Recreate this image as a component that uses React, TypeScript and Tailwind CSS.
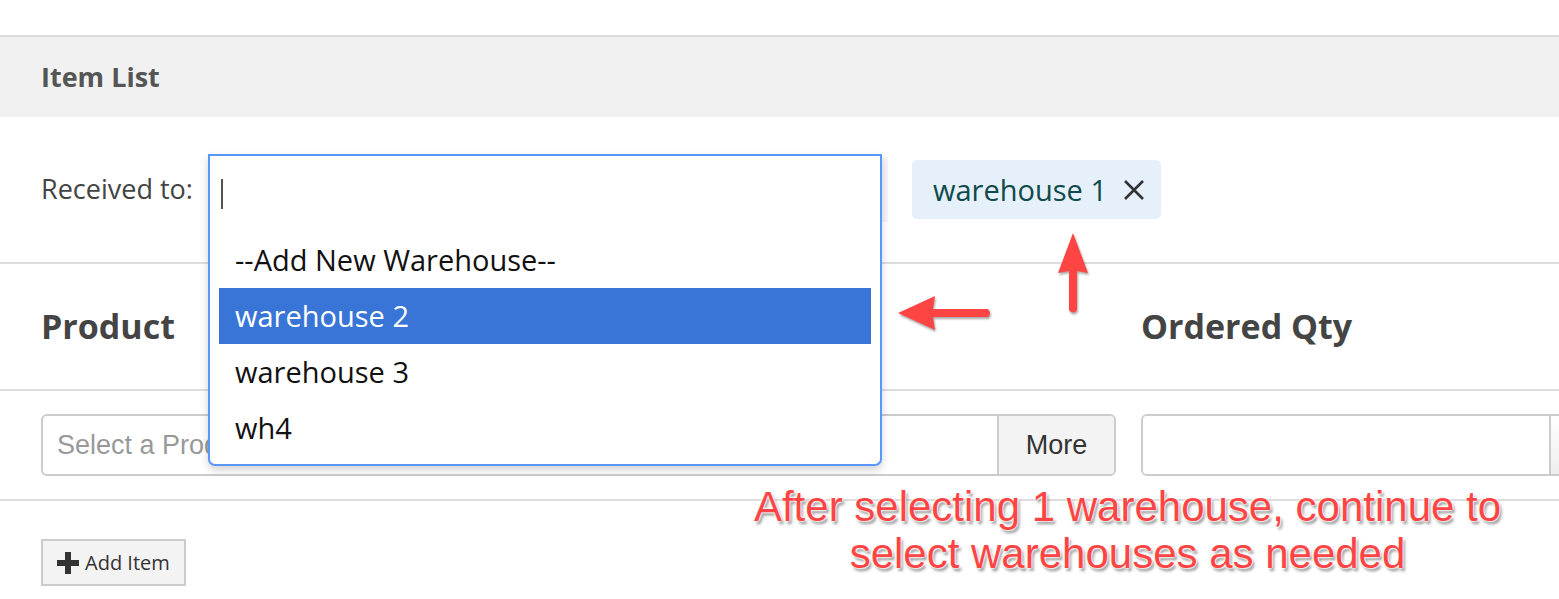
import React from "react";

const options = ["--Add New Warehouse--", "warehouse 2", "warehouse 3", "wh4"];

function PlusIcon() {
    return (
        <svg width="24" height="24" viewBox="0 0 24 24" className="shrink-0">
            <path d="M12 1v22M1 12h22" stroke="#333333" strokeWidth="6" />
        </svg>
    );
}

function LeftArrow() {
    return (
        <svg width="110" height="50" viewBox="0 0 110 50" className="absolute left-[893px] top-[290px] z-20 drop-shadow-[1px_2px_1px_rgba(0,0,0,0.35)]">
            <path d="M5 23 L42 6 L40 19 L95 19 Q99 23 95 27 L40 27 L42 40 Z" fill="#ff4444" />
        </svg>
    );
}

function UpArrow() {
    return (
        <svg width="40" height="90" viewBox="0 0 40 90" className="absolute left-[1054px] top-[230px] z-20 drop-shadow-[1px_2px_1px_rgba(0,0,0,0.35)]">
            <path d="M19 3 L34 43 L23 41 L23 80 Q19 85 15 80 L15 41 L4 43 Z" fill="#ff4444" />
        </svg>
    );
}

export default function App() {
    return (
        <div className="relative w-[1559px] h-[599px] overflow-hidden bg-white font-['Open_Sans',sans-serif]">
            {/* Top spacer */}
            <div className="h-[35px]"></div>

            {/* Header */}
            <div className="h-[82px] border-t-2 border-[#dddddd] bg-[#f1f1f1] flex items-center px-[41px]">
                <h2 className="text-[27px] font-bold text-[#555555]">Item List</h2>
            </div>

            {/* Received to row */}
            <div className="relative h-[145px] flex items-center px-[41px]">
                <span className="text-[27px] text-[#444444] w-[167px]">Received to:</span>
                <div className="w-[680px] h-[65px] bg-[#f6f6f6]"></div>
                <div className="ml-[24px] h-[59px] flex items-center gap-[16px] rounded-[5px] bg-[#e6f0fa] pl-[21px] pr-[16px]">
                    <span className="text-[29px] text-[#0f4a4a]">warehouse 1</span>
                    <svg width="22" height="22" viewBox="0 0 22 22">
                        <path d="M2 2 L20 20 M20 2 L2 20" stroke="#333333" strokeWidth="2.6" />
                    </svg>
                </div>

                {/* Dropdown */}
                <div className="absolute left-[208px] top-[37px] z-10 w-[674px] h-[312px] border-2 border-[#5897fb] rounded-b-[7px] bg-white shadow-[0_4px_8px_rgba(0,0,0,0.18)]">
                    <div className="h-[76px] flex items-center pl-[11px] bg-white">
                        <div className="w-[2px] h-[30px] bg-[#555555]"></div>
                    </div>
                    <ul className="pl-[9px] pr-[9px]">
                        {options.map((o, i) => (
                            <li
                                key={o}
                                className={`h-[56px] flex items-center pl-[16px] text-[29px] ${i === 1 ? "bg-[#3875d7] text-white" : "text-[#111111]"}`}
                            >
                                {o}
                            </li>
                        ))}
                    </ul>
                </div>
            </div>

            {/* Column headers */}
            <div className="h-[127px] border-t-2 border-[#dddddd] flex items-center px-[41px] gap-[25px]">
                <div className="w-[1075px] shrink-0 text-[34px] font-bold text-[#444444]">Product</div>
                <div className="shrink-0 text-[34px] font-bold text-[#444444]">Ordered Qty</div>
            </div>

            {/* Inputs row */}
            <div className="h-[110px] border-t-2 border-[#dddddd] flex items-center px-[41px] gap-[25px]">
                <div className="w-[1075px] h-[62px] shrink-0 flex border-2 border-[#cccccc] rounded-[6px] overflow-hidden font-['Liberation_Sans',Arial,sans-serif]">
                    <div className="flex-1 flex items-center pl-[14px] text-[27px] text-[#999999]">Select a Product</div>
                    <div className="w-[117px] flex items-center justify-center border-l-2 border-[#cccccc] bg-[#f3f3f3] text-[27px] text-[#333333]">More</div>
                </div>
                <div className="w-[470px] h-[62px] shrink-0 flex border-2 border-[#cccccc] rounded-[6px] overflow-hidden">
                    <div className="w-[406px] bg-white"></div>
                    <div className="flex-1 border-l-2 border-[#cccccc] bg-gradient-to-b from-white to-[#eeeeee]"></div>
                </div>
            </div>

            {/* Add item row */}
            <div className="border-t-2 border-[#dddddd] px-[41px] pt-[38px]">
                <button className="h-[47px] w-[145px] flex items-center gap-[5px] pl-[13px] border-2 border-[#cccccc] bg-[#f3f3f3] text-[20px] text-[#333333]">
                    <PlusIcon />
                    <span>Add Item</span>
                </button>
            </div>

            {/* Annotations */}
            <LeftArrow />
            <UpArrow />
            <div className="absolute left-[700px] top-[483px] w-[855px] z-20 text-center font-['Liberation_Sans',Arial,sans-serif] text-[42px] leading-[47px] text-[#ff4444] [text-shadow:0_0_2px_#fff,0_0_2px_#fff,0_0_3px_#fff,2px_3px_3px_rgba(0,0,0,0.45)]">
                After selecting 1 warehouse, continue to
                <br />
                select warehouses as needed
            </div>
        </div>
    );
}
